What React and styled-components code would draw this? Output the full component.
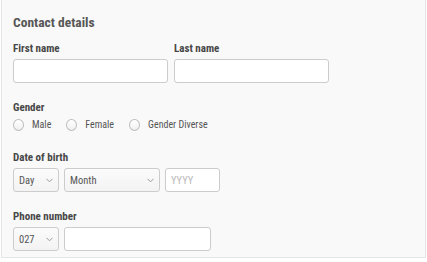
import React from "react";
import styled, { createGlobalStyle } from "styled-components";

const Global = createGlobalStyle`
  html, body { margin: 0; padding: 0; background: #ffffff; }
  body { font-family: "Roboto Condensed", "Liberation Sans", sans-serif; }
  * { box-sizing: border-box; }
`;

const Panel = styled.section`
  margin-left: 1px;
  width: 425px;
  height: 258px;
  background: #f9f9f9;
  border-left: 1px solid #e6e6e6;
  border-right: 1px solid #e6e6e6;
  border-bottom: 1px solid #e6e6e6;
  padding: 14px 0 0 11px;
  display: flex;
  flex-direction: column;
`;

const Heading = styled.h2`
  margin: 0;
  font-size: 13.5px;
  line-height: 16px;
  font-weight: 700;
  color: #575757;
`;

const Section = styled.div`
  margin-top: ${(p) => p.$top || 18}px;
  display: flex;
  flex-direction: column;
`;

const Label = styled.div`
  font-size: 11px;
  line-height: 13px;
  font-weight: 700;
  color: #474747;
  margin-bottom: ${(p) => (p.$tight ? 3 : 4)}px;
`;

const Row = styled.div`
  display: flex;
  gap: ${(p) => p.$gap || 5}px;
  align-items: center;
`;

const Field = styled.div`
  display: flex;
  flex-direction: column;
`;

const TextInput = styled.input`
  width: ${(p) => p.$w}px;
  height: 24px;
  border: 1px solid #cccccc;
  border-radius: 3px;
  background: #ffffff;
  padding: 0 5px;
  font: inherit;
  font-size: 10.5px;
  color: #555;
  outline: none;
  &::placeholder { color: #b8b8b8; }
`;

const SelectBox = styled.div`
  width: ${(p) => p.$w}px;
  height: 24px;
  border: 1px solid #cccccc;
  border-radius: 3px;
  background: linear-gradient(#fbfbfb, #f3f3f3);
  padding: 0 5px;
  display: flex;
  align-items: center;
  justify-content: space-between;
  font-size: 10.5px;
  color: #555555;
`;

const Chevron = () => (
  <svg width="7" height="5" viewBox="0 0 7 5">
    <polyline points="0.5,0.8 3.5,3.8 6.5,0.8" fill="none" stroke="#9a9a9a" strokeWidth="1" />
  </svg>
);

const RadioRow = styled.div`
  display: flex;
  align-items: center;
  height: 16px;
`;

const RadioItem = styled.label`
  display: flex;
  align-items: center;
  gap: 8px;
  margin-right: 15px;
  font-size: 10px;
  line-height: 16px;
  color: #555555;
`;

const RadioCircle = styled.span`
  width: 11px;
  height: 12px;
  border-radius: 50%;
  border: 1px solid #bdbdbd;
  background: linear-gradient(#ffffff, #f0f0f0);
  display: inline-block;
`;

const Select = ({ w, value }) => (
  <SelectBox $w={w}>
    <span>{value}</span>
    <Chevron />
  </SelectBox>
);

export default function App() {
  return (
    <>
      <Global />
      <Panel>
        <Heading>Contact details</Heading>
        <Section $top={12}>
          <Row $gap={6}>
            <Field>
              <Label>First name</Label>
              <TextInput $w={155} />
            </Field>
            <Field>
              <Label>Last name</Label>
              <TextInput $w={155} />
            </Field>
          </Row>
        </Section>
        <Section>
          <Label $tight>Gender</Label>
          <RadioRow>
            <RadioItem><RadioCircle />Male</RadioItem>
            <RadioItem><RadioCircle />Female</RadioItem>
            <RadioItem><RadioCircle />Gender Diverse</RadioItem>
          </RadioRow>
        </Section>
        <Section>
          <Label>Date of birth</Label>
          <Row>
            <Select w={46} value="Day" />
            <Select w={96} value="Month" />
            <TextInput $w={55} placeholder="YYYY" />
          </Row>
        </Section>
        <Section>
          <Label>Phone number</Label>
          <Row>
            <Select w={46} value="027" />
            <TextInput $w={147} />
          </Row>
        </Section>
      </Panel>
    </>
  );
}
